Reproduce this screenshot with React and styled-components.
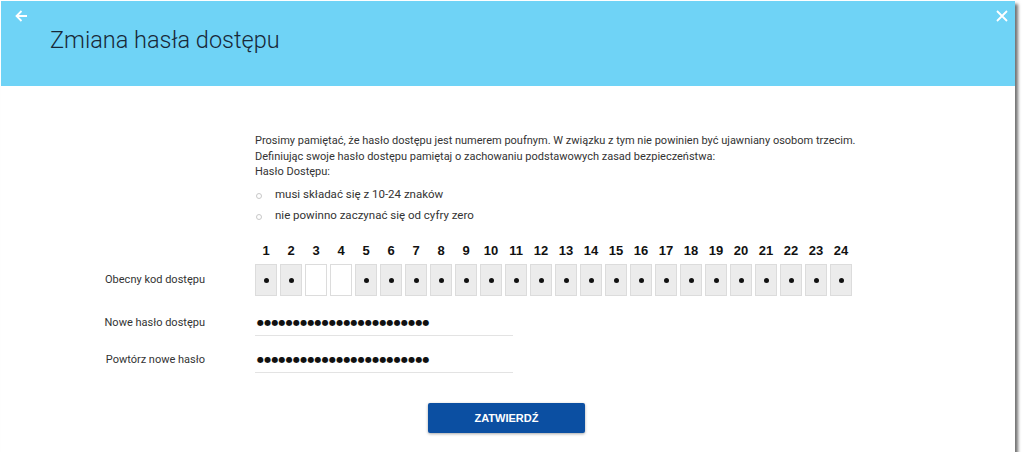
import React from 'react'
import styled, { createGlobalStyle } from 'styled-components'

const GlobalStyle = createGlobalStyle`
  html, body {
    margin: 0;
    padding: 0;
    background: #fff;
  }
  body {
    font-family: Roboto, "Liberation Sans", sans-serif;
    color: #333;
  }
`

const Panel = styled.div`
  width: 1014px;
  height: 451px;
  margin: 1px 0 0 1px;
  background: #fff;
  box-shadow: 3px 3px 3px rgba(0, 0, 0, 0.55);
  display: flex;
  flex-direction: column;
`

const Header = styled.div`
  position: relative;
  height: 85px;
  background: #6fd3f6;
  display: flex;
  align-items: flex-start;
  padding: 25px 0 0 49px;
  box-sizing: border-box;
`

const Title = styled.h1`
  margin: 0;
  font-weight: 300;
  font-size: 23.5px;
  color: #182838;
`

const IconButton = styled.button`
  position: absolute;
  top: ${p => p.$top}px;
  ${p => p.$side}: ${p => p.$offset}px;
  background: none;
  border: 0;
  padding: 0;
  display: flex;
  cursor: pointer;
`

const Body = styled.div`
  display: grid;
  grid-template-columns: 254px 1fr;
  padding-top: 47px;
`

const Main = styled.div`
  grid-column: 2;
  font-size: 11px;
  line-height: 15.5px;
  color: #333;
`

const Rules = styled.ul`
  list-style: none;
  margin: 5px 0 0;
  padding: 0;
`

const Rule = styled.li`
  display: flex;
  align-items: center;
  height: 21px;
  font-size: 11.5px;
  &::before {
    content: '';
    width: 4px;
    height: 4px;
    border: 1px solid #c8c8c8;
    border-radius: 50%;
    margin: 2px 13px 0 1px;
  }
`

const Label = styled.div`
  grid-column: 1;
  font-size: 11px;
  color: #333;
  text-align: right;
  padding-right: 50px;
  margin-top: ${p => p.$gap || 0}px;
  padding-bottom: ${p => (p.$gap ? 2 : 0)}px;
  align-self: center;
`

const Digits = styled.div`
  display: flex;
  gap: 3px;
  margin-top: 16px;
`

const DigitCol = styled.div`
  display: flex;
  flex-direction: column;
  align-items: center;
  width: 22px;
`

const DigitNum = styled.div`
  font-family: "Liberation Sans", Arial, sans-serif;
  font-weight: 700;
  font-size: 13px;
  line-height: 16px;
  color: #111;
  margin-bottom: 5px;
`

const DigitBox = styled.div`
  width: 22px;
  height: 32px;
  box-sizing: border-box;
  border: 1px solid #dcdcdc;
  background: ${p => (p.$filled ? '#ececec' : '#fff')};
  display: flex;
  align-items: center;
  justify-content: center;
  &::after {
    content: ${p => (p.$filled ? "''" : 'none')};
    width: 5px;
    height: 5px;
    border-radius: 50%;
    background: #111;
    margin-top: 2px;
  }
`

const DigitsRow = styled.div`
  grid-column: 2;
  display: flex;
  gap: 3px;
`

const PassInput = styled.div`
  grid-column: 2;
  width: 258px;
  height: 24px;
  margin-top: ${p => p.$gap}px;
  padding: 0 0 2px 2px;
  box-sizing: border-box;
  border-bottom: 1px solid #e3e3e3;
  display: flex;
  align-items: center;
  font-family: "DejaVu Sans", sans-serif;
  font-size: 8px;
  letter-spacing: 0.22px;
  color: #111;
`

const Actions = styled.div`
  grid-column: 1 / span 2;
  display: flex;
  justify-content: center;
  padding: 30px 3px 0 0;
`

const Submit = styled.button`
  width: 157px;
  height: 30px;
  border: 0;
  border-radius: 2px;
  background: #0b4fa2;
  box-shadow: 0 1px 3px rgba(0, 0, 0, 0.35);
  color: #fff;
  font-family: "Liberation Sans", Arial, sans-serif;
  font-weight: 700;
  font-size: 11px;
  cursor: pointer;
`

const emptyPositions = [3, 4]
const digits = Array.from({ length: 24 }, (_, i) => i + 1)
const dots = '●'.repeat(24)

const ArrowLeft = () => (
  <svg width="13" height="12" viewBox="0 0 13 12" fill="none" stroke="#fff" strokeWidth="1.8">
    <path d="M12 6H1.5M6.5 1L1.5 6l5 5" />
  </svg>
)

const Close = () => (
  <svg width="12" height="12" viewBox="0 0 12 12" stroke="#fff" strokeWidth="1.8">
    <path d="M1 1l10 10M11 1L1 11" />
  </svg>
)

export default function App() {
  return (
    <>
      <GlobalStyle />
      <Panel>
        <Header>
          <IconButton $side="left" $offset={14} $top={9}><ArrowLeft /></IconButton>
          <Title>Zmiana hasła dostępu</Title>
          <IconButton $side="right" $offset={7} $top={9}><Close /></IconButton>
        </Header>
        <Body>
          <Main>
            Prosimy pamiętać, że hasło dostępu jest numerem poufnym. W związku z tym nie powinien być ujawniany osobom trzecim.<br />
            Definiując swoje hasło dostępu pamiętaj o zachowaniu podstawowych zasad bezpieczeństwa:<br />
            Hasło Dostępu:
            <Rules>
              <Rule>musi składać się z 10-24 znaków</Rule>
              <Rule>nie powinno zaczynać się od cyfry zero</Rule>
            </Rules>
            <Digits>
              {digits.map(n => (
                <DigitCol key={n}>
                  <DigitNum>{n}</DigitNum>
                </DigitCol>
              ))}
            </Digits>
          </Main>
          <Label>Obecny kod dostępu</Label>
          <DigitsRow>
            {digits.map(n => (
              <DigitBox key={n} $filled={!emptyPositions.includes(n)} />
            ))}
          </DigitsRow>
          <Label $gap={16}>Nowe hasło dostępu</Label>
          <PassInput $gap={16}>{dots}</PassInput>
          <Label $gap={13}>Powtórz nowe hasło</Label>
          <PassInput $gap={13}>{dots}</PassInput>
          <Actions>
            <Submit>ZATWIERDŹ</Submit>
          </Actions>
        </Body>
      </Panel>
    </>
  )
}
